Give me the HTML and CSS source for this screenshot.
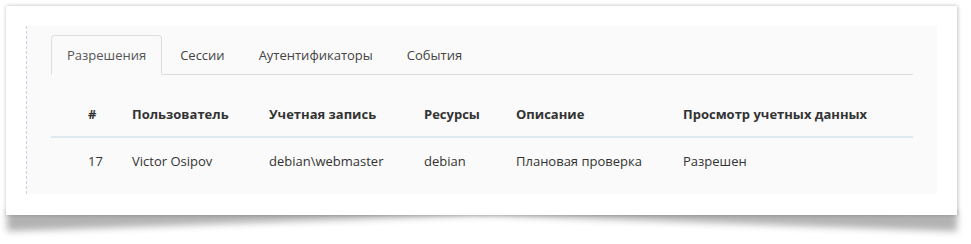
FILE: index.html
```html
<!DOCTYPE html>
<html lang="ru">
<head>
  <meta charset="UTF-8" />
  <title>Разрешения</title>
  <link rel="stylesheet" href="styles.css">
</head>
<body>
  <div class="page">
    <div class="card">
      <div class="panel">
        <ul class="tabs">
          <li class="active"><a>Разрешения</a></li>
          <li><a>Сессии</a></li>
          <li><a>Аутентификаторы</a></li>
          <li><a>События</a></li>
        </ul>

        <table class="grid">
          <colgroup>
            <col class="c-num"><col class="c-user"><col class="c-acc">
            <col class="c-res"><col class="c-desc"><col class="c-view">
          </colgroup>
          <thead>
            <tr>
              <th>#</th>
              <th>Пользователь</th>
              <th>Учетная запись</th>
              <th>Ресурсы</th>
              <th>Описание</th>
              <th>Просмотр учетных данных</th>
            </tr>
          </thead>
          <tbody>
            <tr>
              <td>17</td>
              <td>Victor Osipov</td>
              <td>debian\webmaster</td>
              <td>debian</td>
              <td>Плановая проверка</td>
              <td>Разрешен</td>
            </tr>
          </tbody>
        </table>
      </div>
    </div>
  </div>
</body>
</html>
```

FILE: styles.css
```css
body {
  margin: 0;
  background: #fff;
  font-family: "Open Sans", "Noto Sans", sans-serif;
  font-size: 13px;
  color: #444;
}

.page {
  position: relative;
  z-index: 0;
  height: 244px;
  box-sizing: border-box;
  padding: 6px 0 0 6px;
  background: #fff;
}

/* white frame with lifted-corner shadow */
.card {
  position: relative;
  width: 951px;
  height: 209px;
  box-sizing: border-box;
  padding: 20px 20px 0 20px;
  background: #fff;
  box-shadow: 0 0 4px rgba(0,0,0,0.22), 2px 0 3px rgba(0,0,0,0.08);
}

.card::before,
.card::after {
  content: "";
  position: absolute;
  z-index: -1;
  bottom: 14px;
  width: 50%;
  height: 20px;
  box-shadow: 0 22px 7px rgba(0,0,0,0.3);
}

.card::before {
  left: 0;
  transform: rotate(-2deg);
}

.card::after {
  right: 0;
  transform: rotate(2deg);
}

.panel {
  height: 168px;
  box-sizing: border-box;
  padding: 9px 24px 0 24px;
  background: #fafafa;
  border-left: 1px dashed #cad3e6;
}

/* tabs */
.tabs {
  display: flex;
  margin: 0;
  padding: 0;
  list-style: none;
  border-bottom: 1px solid #dddddd;
}

.tabs li {
  margin: 0 2px -1px 0;
}

.tabs a {
  display: block;
  padding: 10px 15px;
  line-height: 18px;
  color: #444;
  border: 1px solid transparent;
  border-radius: 4px 4px 0 0;
}

.tabs .active a {
  color: #555;
  background: #fafafa;
  border-color: #dddddd #dddddd transparent;
}

/* table */
.grid {
  width: 100%;
  border-collapse: collapse;
  table-layout: fixed;
}

.c-num { width: 73px; }
.c-user { width: 137px; }
.c-acc { width: 155px; }
.c-res { width: 92px; }
.c-desc { width: 167px; }

.grid th,
.grid td {
  text-align: left;
  line-height: 18px;
  padding-left: 8px;
  padding-right: 8px;
  white-space: nowrap;
}

.grid th:first-child,
.grid td:first-child {
  padding-left: 37px;
}

.grid th {
  padding-top: 30px;
  padding-bottom: 13px;
  color: #333;
  font-weight: bold;
  border-bottom: 2px solid #dde9ee;
}

.grid td {
  padding-top: 14px;
  padding-bottom: 14px;
  color: #333;
}
```
